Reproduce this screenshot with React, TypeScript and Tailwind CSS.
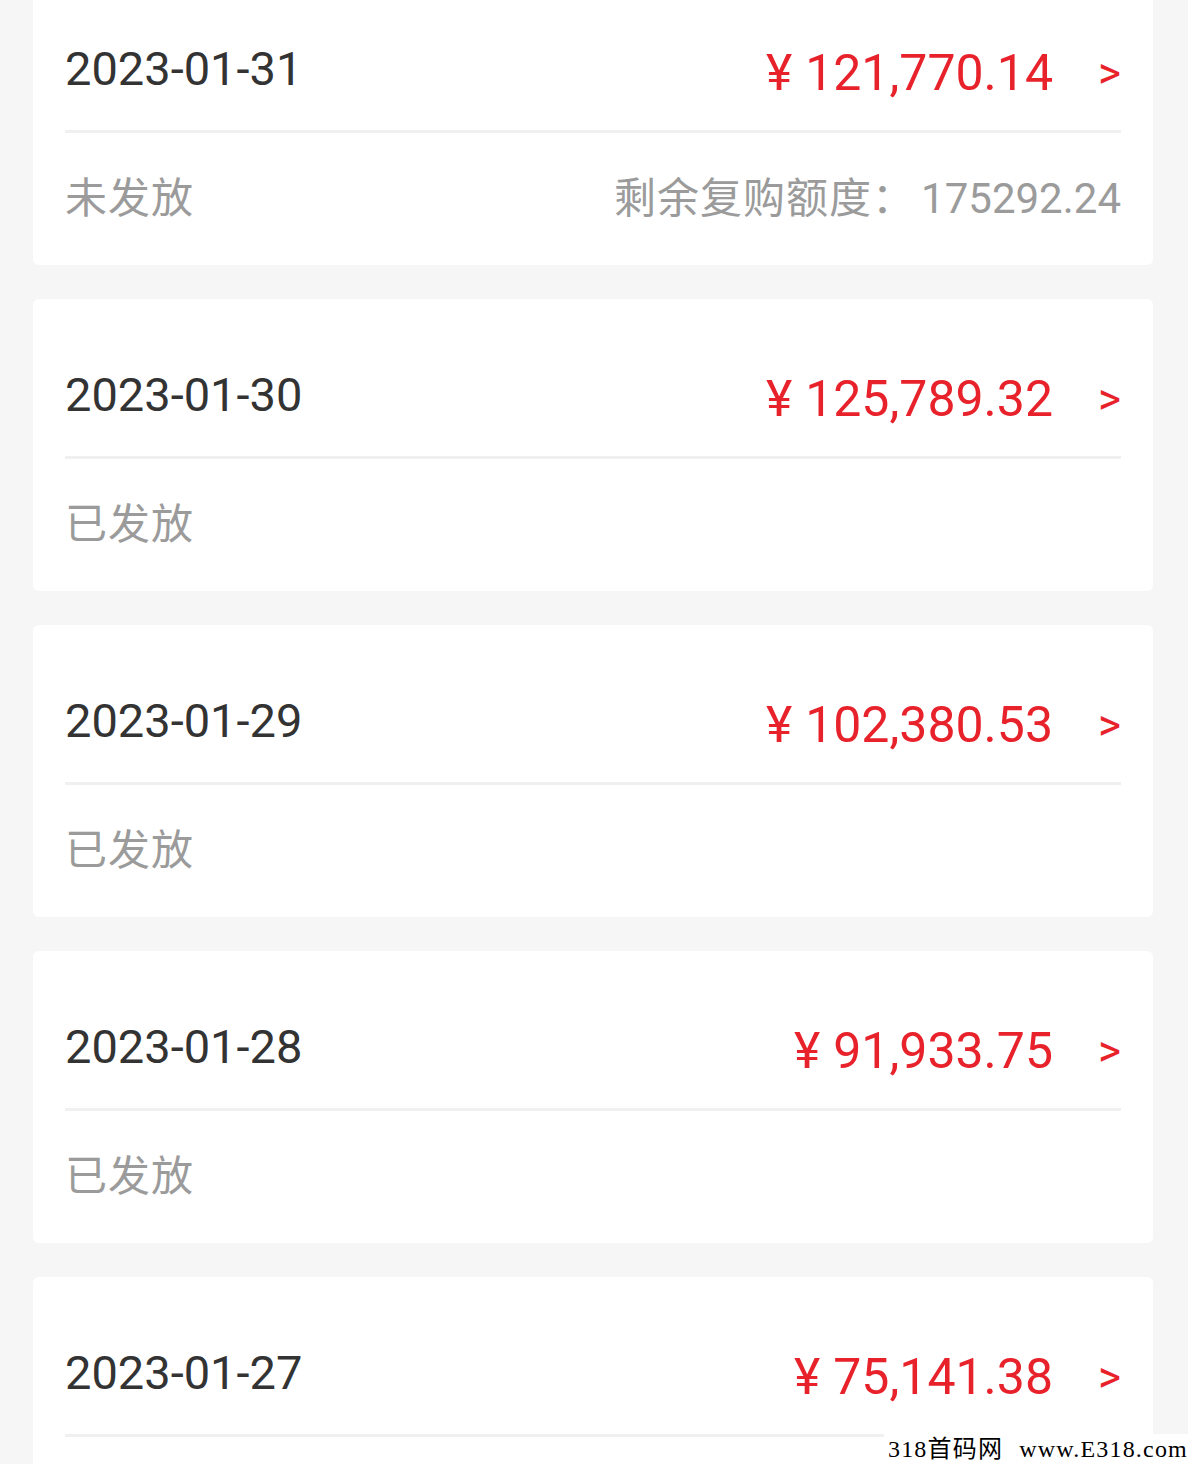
import React from "react";

const records = [
  { date: "2023-01-31", amount: "121,770.14", issued: false, quota: "175292.24" },
  { date: "2023-01-30", amount: "125,789.32", issued: true },
  { date: "2023-01-29", amount: "102,380.53", issued: true },
  { date: "2023-01-28", amount: "91,933.75", issued: true },
  { date: "2023-01-27", amount: "75,141.38", issued: true },
];

function RecordCard({ record }: { record: (typeof records)[number] }) {
  return (
    <div className="flex h-[292px] flex-col rounded-md bg-white px-[32px]">
      <div className="flex h-[160px] items-center justify-between border-b-[3px] border-[#f0f0f0] pt-[34px]">
        <span className="text-[47px] leading-none text-[#333333]">{record.date}</span>
        <div className="mt-[8px] flex items-center text-[#e8222b]">
          <span className="text-[50px] leading-none">
            <span className="mr-[13px]">¥</span>
            {record.amount}
          </span>
          <span className="ml-[45px] text-[44px] leading-none">&gt;</span>
        </div>
      </div>
      <div className="flex flex-1 items-center justify-between text-[42px] leading-none text-[#9b9b9b]">
        <span className="tracking-[1px]">{record.issued ? "已发放" : "未发放"}</span>
        {record.quota && (
          <span className="tracking-[1px]">
            剩余复购额度：<span className="ml-[6px] tracking-[0px]">{record.quota}</span>
          </span>
        )}
      </div>
    </div>
  );
}

export default function App() {
  return (
    <div
      className="relative h-[1464px] overflow-hidden bg-[#f6f6f6]"
      style={{ fontFamily: 'Roboto, "Noto Sans CJK SC", sans-serif' }}
    >
      <div className="-mt-[27px] flex flex-col gap-[34px] pl-[33px] pr-[35px]">
        {records.map((record) => (
          <RecordCard key={record.date} record={record} />
        ))}
      </div>
      <div
        className="absolute bottom-0 right-0 flex gap-[16px] bg-white pl-[4px] text-[24px] leading-[30px] tracking-[1.2px] text-black"
        style={{ fontFamily: '"Liberation Serif", "Noto Sans CJK SC", serif' }}
      >
        <span>318首码网</span>
        <span>www.E318.com</span>
      </div>
    </div>
  );
}
